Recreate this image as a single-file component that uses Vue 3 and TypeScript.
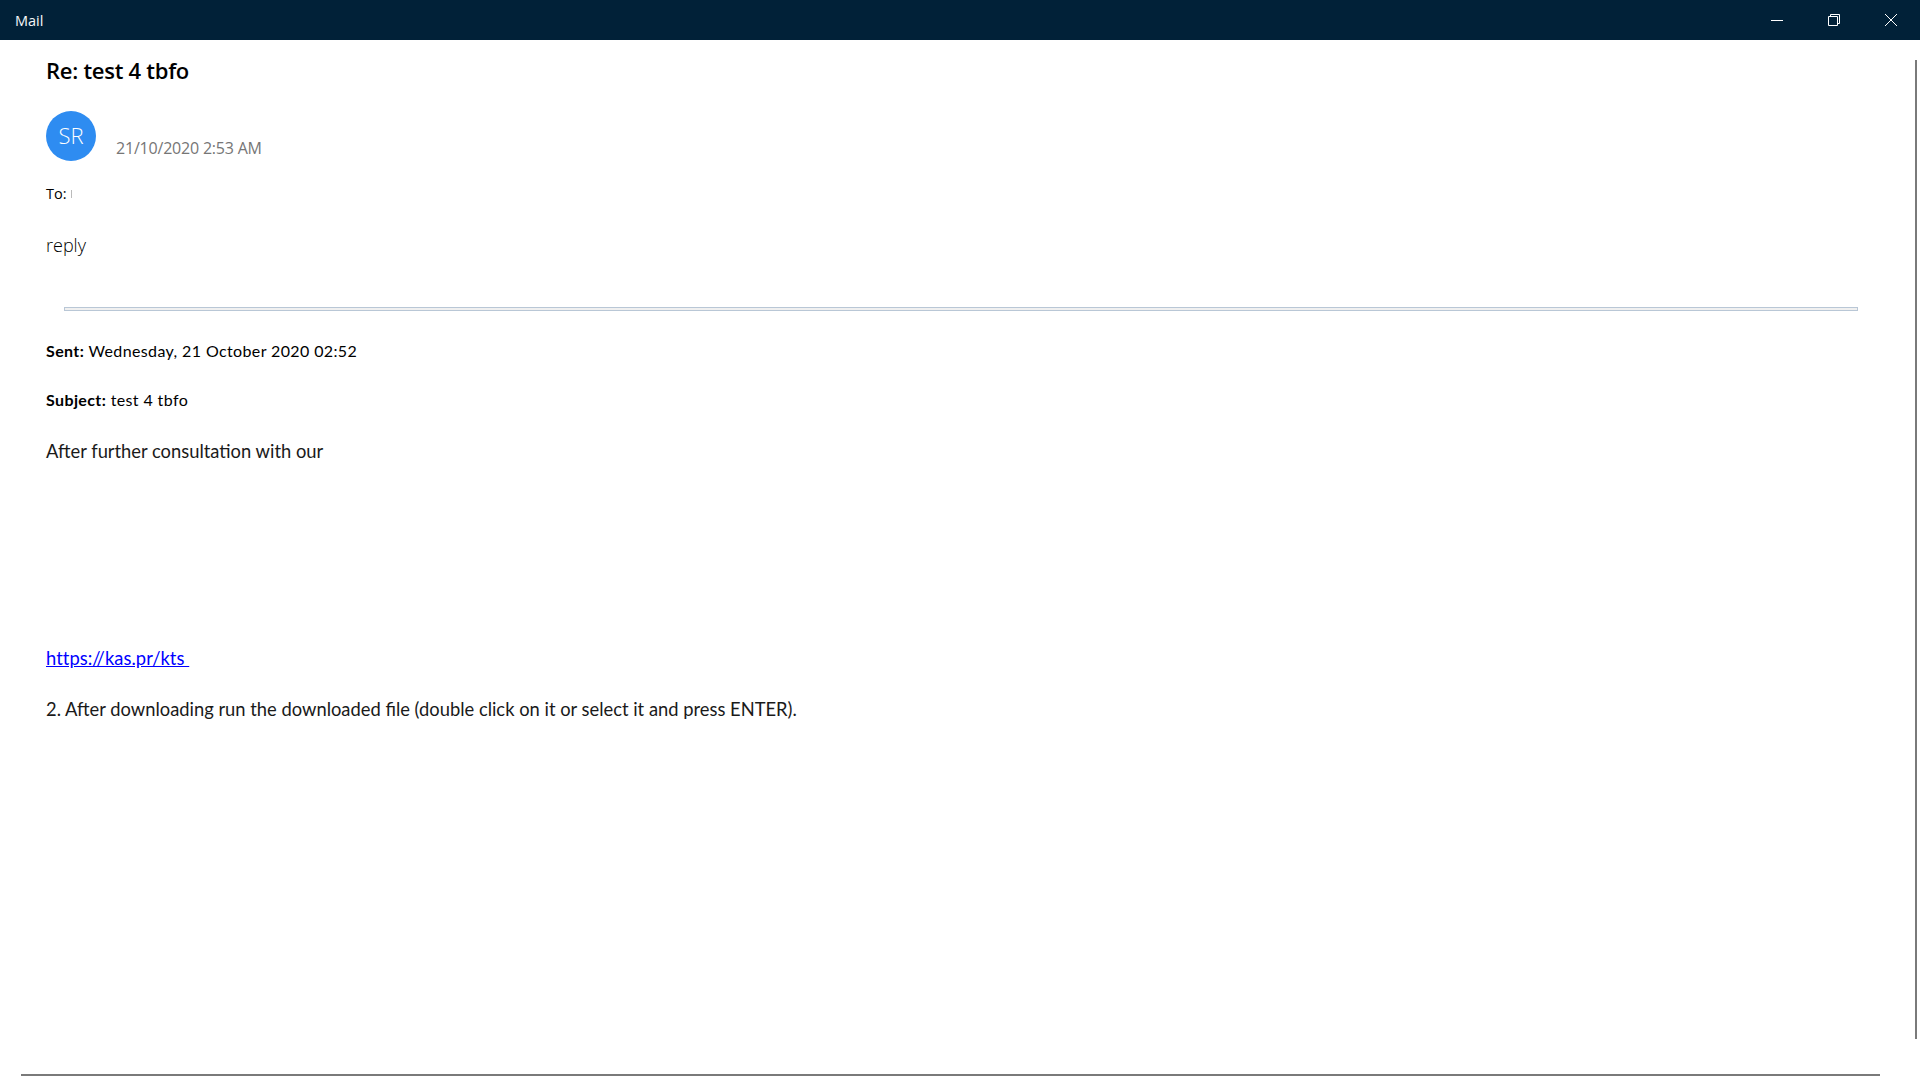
<script setup lang="ts">
const meta = [
  { label: 'Sent:', value: 'Wednesday, 21 October 2020 02:52' },
  { label: 'Subject:', value: 'test 4 tbfo' },
]
</script>

<template>
  <div class="window">
    <header class="titlebar">
      <span class="app">Mail</span>
      <div class="controls">
        <button class="ctl" aria-label="Minimize">
          <svg width="14" height="14" viewBox="0 0 14 14"><path d="M1 7.5h12" stroke="#fff" fill="none" /></svg>
        </button>
        <button class="ctl" aria-label="Restore">
          <svg width="14" height="14" viewBox="0 0 14 14"><path d="M1.5 3.5h9v9h-9zM3.5 3.5v-2h9v9h-2" stroke="#fff" fill="none" /></svg>
        </button>
        <button class="ctl" aria-label="Close">
          <svg width="14" height="14" viewBox="0 0 14 14"><path d="M1 1l12 12M13 1L1 13" stroke="#fff" fill="none" /></svg>
        </button>
      </div>
    </header>
    <main class="content">
      <h1 class="subject">Re: test 4 tbfo</h1>
      <div class="sender">
        <div class="avatar">SR</div>
        <div class="date">21/10/2020 2:53 AM</div>
      </div>
      <div class="to">To: <span class="redacted"></span></div>
      <p class="reply">reply</p>
      <div class="rule"></div>
      <p v-for="m in meta" :key="m.label" class="meta"><b>{{ m.label }}</b> {{ m.value }}</p>
      <p class="body first">After further consultation with our</p>
      <a class="link" href="#">https://kas.pr/kts&nbsp;</a>
      <p class="body">2. After downloading run the downloaded file (double click on it or select it and press ENTER).</p>
    </main>
    <div class="vbar"></div>
    <div class="hbar"></div>
  </div>
</template>

<style scoped>
.window {
  position: relative;
  width: 1920px;
  height: 1080px;
  overflow: hidden;
  background: #fff;
  font-family: "Open Sans", "Noto Sans", sans-serif;
  color: #000;
}
.titlebar {
  height: 40px;
  background: #012138;
  display: flex;
  align-items: center;
  justify-content: space-between;
  padding-left: 15px;
}
.app {
  color: #f6f7f9;
  font-size: 14.5px;
}
.controls {
  display: flex;
  padding-right: 1px;
}
.ctl {
  width: 57px;
  height: 40px;
  border: 0;
  padding: 0;
  background: none;
  display: flex;
  align-items: center;
  justify-content: center;
}
.content {
  padding: 0 62px 0 46px;
  display: flex;
  flex-direction: column;
  align-items: flex-start;
}
.subject {
  margin: 15px 0 0;
  font-size: 22px;
  font-weight: 600;
  line-height: 30px;
  letter-spacing: -0.27px;
}
.sender {
  margin-top: 26px;
  display: flex;
  align-items: flex-end;
  gap: 20px;
}
.avatar {
  width: 50px;
  height: 50px;
  border-radius: 50%;
  background: #2e8cf1;
  color: #fff;
  font-size: 22px;
  line-height: 49px;
  text-align: center;
  font-weight: 300;
}
.date {
  color: #767676;
  font-size: 16px;
  line-height: 20px;
  letter-spacing: -0.2px;
  padding-bottom: 3px;
}
.to {
  margin-top: 23px;
  font-size: 14.5px;
  line-height: 20px;
  display: flex;
  align-items: center;
  gap: 4px;
}
.redacted {
  width: 1px;
  height: 8px;
  background: #bbb;
}
.reply {
  margin: 28px 0 0;
  font-size: 18px;
  line-height: 26px;
  font-weight: 300;
  color: #000;
}
.rule {
  align-self: stretch;
  margin: 49px 0 0 18px;
  height: 4px;
  box-sizing: border-box;
  border: 1px solid #b9c7d6;
  background: #f0f0f0;
}
.meta {
  margin: 30px 0 0;
  font-family: Lato, sans-serif;
  font-size: 16px;
  letter-spacing: 0.38px;
  line-height: 20px;
}
.meta + .meta {
  margin-top: 29px;
}
.body {
  margin: 27px 0 0;
  font-family: Lato, sans-serif;
  font-size: 18.35px;
  color: #1a1a1a;
  line-height: 24px;
}
.body.first {
  margin: 29px 0 183px;
}
.link {
  font-family: Lato, sans-serif;
  font-size: 18.35px;
  letter-spacing: 0.05px;
  line-height: 24px;
  color: #0000ff;
  text-decoration: underline;
}
.vbar {
  position: absolute;
  left: 1915px;
  top: 60px;
  width: 2px;
  height: 979px;
  background: #7a7a7a;
}
.hbar {
  position: absolute;
  left: 21px;
  top: 1074px;
  width: 1859px;
  height: 2px;
  background: #7a7a7a;
}
</style>
